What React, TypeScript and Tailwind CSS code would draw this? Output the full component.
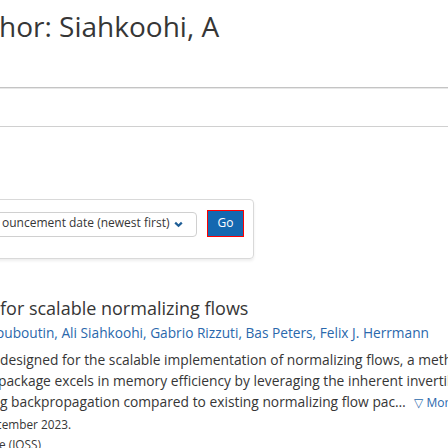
import React from 'react';

const ChevronDown: React.FC = () => (
  <svg width="9" height="7" viewBox="0 0 9 7" className="shrink-0">
    <path d="M1.2 1.6 L4.5 4.8 L7.8 1.6" fill="none" stroke="#1f5e96" strokeWidth="2.2" />
  </svg>
);

const App: React.FC = () => {
  return (
    <div
      className="w-[448px] h-[448px] overflow-hidden bg-white text-[#363636]"
      style={{ fontFamily: '"Open Sans", "Noto Sans", sans-serif' }}
    >
      {/* page title */}
      <div className="h-[87px] pt-[8px]">
        <h1 className="text-[28px] leading-[36px] whitespace-nowrap -ml-[1px]">hor: Siahkoohi, A</h1>
      </div>
      <div className="h-px bg-[#c4c4c4]" />
      <div className="h-px bg-[#e8e8e8]" />

      <div className="h-[37px]" />
      <div className="h-px bg-[#d0d0d0]" />

      <div className="h-[72px]" />

      {/* sort controls */}
      <div className="w-[264px] h-[60px] -ml-[10px] pl-[10px] pt-[10px] border border-[#d9d9d9] rounded-[4px] shadow-[0_2px_3px_rgba(0,0,0,0.07)] flex items-start gap-[10px]">
        <div className="w-[206px] h-[25px] -ml-[10px] pl-[10px] pr-[13px] mt-[2px] border border-[#d0d0d0] rounded-[4px] flex items-center justify-between">
          <span className="mb-[4px] text-[12px] leading-[16px] whitespace-nowrap text-[#363636]">ouncement date (newest first)</span>
          <ChevronDown />
        </div>
        <button className="w-[37px] h-[27px] pb-[2px] bg-[#1468b0] border border-[#ff0000] text-white text-[12px] flex items-center justify-center">
          Go
        </button>
      </div>

      <div className="h-[37px]" />

      {/* result */}
      <div className="whitespace-nowrap">
        <p className="text-[18px] leading-[24px] text-[#363636]">for scalable normalizing flows</p>
        <p className="mt-[3px] text-[13.7px] leading-[20px] text-[#2a68ac] -ml-[4px]">
          ouboutin, Ali Siahkoohi, Gabrio Rizzuti, Bas Peters, Felix J. Herrmann
        </p>
        <div className="mt-[6px] text-[13.8px] leading-[21px] text-[#363636]">
          <p>designed for the scalable implementation of normalizing flows, a method</p>
          <p className="-ml-[2px]">package excels in memory efficiency by leveraging the inherent invertibility</p>
          <p>
            g backpropagation compared to existing normalizing flow pac…{' '}
            <span className="ml-[5px] text-[12px] text-[#2a68ac]">▽ More</span>
          </p>
        </div>
        <p className="mt-[1px] text-[11.8px] leading-[20px] -ml-[4px]">cember 2023.</p>
        <p className="text-[11.8px] leading-[20px] -ml-[1px]">e (JOSS)</p>
      </div>
    </div>
  );
};

export default App;
